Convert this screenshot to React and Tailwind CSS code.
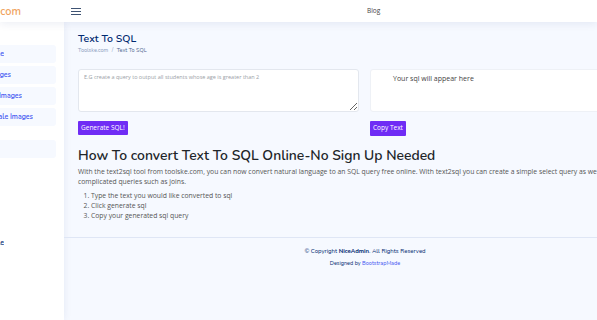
import React from 'react';

const navItems = [
  { label: 'Home', clip: 'w-[4px]' },
  { label: 'Resize Images', clip: 'w-[11px]' },
  { label: 'Compress Images', clip: 'w-[22px]' },
  { label: 'Upscale Images', clip: 'w-[33px]' },
];

const App = () => {
  return (
    <div className="w-[597px] h-[320px] overflow-hidden bg-[#f6f9ff] text-[#444444]" style={{ fontFamily: '"Open Sans", sans-serif' }}>
      {/* Header */}
      <header className="relative z-10 flex items-center h-[22px] bg-white shadow-[0_2px_8px_rgba(1,41,112,0.08)]">
        <div className="w-[64px] shrink-0">
          <div className="w-[21px] overflow-hidden flex justify-end">
            <span className="whitespace-nowrap text-[11px] font-semibold text-[#f0a35e] leading-none" style={{ fontFamily: 'Nunito, "Noto Sans", sans-serif' }}>
              toolske.com
            </span>
          </div>
        </div>
        <button className="ml-[7px] flex flex-col gap-[2px] w-[10px]">
          <span className="block h-[1px] w-[10px] bg-[#3e5373]" />
          <span className="block h-[1px] w-[10px] bg-[#3e5373]" />
          <span className="block h-[1px] w-[10px] bg-[#3e5373]" />
        </button>
        <div className="ml-[286px] text-[6.5px] text-[#444]">Blog</div>
      </header>

      <div className="flex h-[298px]">
        {/* Sidebar */}
        <aside className="w-[64px] shrink-0 bg-white shadow-[0_0_8px_rgba(1,41,112,0.08)] pt-[23px] pr-[8px]" style={{ fontFamily: 'Nunito, "Noto Sans", sans-serif' }}>
          <div className="flex flex-col gap-[3px]">
            {navItems.map((item) => (
              <div key={item.label} className="h-[18px] bg-[#f6f9ff] rounded-r-[3px] flex items-center">
                <div className={`${item.clip} overflow-hidden flex justify-end`}>
                  <span className="whitespace-nowrap text-[7px] font-semibold text-[#4154f1]">{item.label}</span>
                </div>
              </div>
            ))}
            <div className="h-[18px] mt-[11px] bg-[#f6f9ff] rounded-r-[3px]" />
          </div>
          <div className="mt-[80px] w-[4px] overflow-hidden flex justify-end">
            <span className="whitespace-nowrap text-[7px] font-semibold text-[#012970]">Profile</span>
          </div>
        </aside>

        {/* Main */}
        <main className="w-[602px] shrink-0 flex flex-col">
          <div className="pl-[14px] pr-[34px] pt-[12px]">
            <h1 className="text-[10.5px] font-semibold text-[#012970] leading-none" style={{ fontFamily: 'Nunito, "Noto Sans", sans-serif' }}>
              Text To SQL
            </h1>
            <div className="mt-[3px] text-[5.5px] text-[#899bbd] leading-none" style={{ fontFamily: 'Nunito, "Noto Sans", sans-serif' }}>
              Toolske.com <span className="mx-[2px]">/</span> <span className="text-[#51678f]">Text To SQL</span>
            </div>

            <div className="mt-[16px] flex gap-[11px]">
              <div className="w-[281px] shrink-0">
                <textarea
                  className="block w-full h-[43px] bg-white border border-[#e3e7ee] rounded-[3px] px-[5px] py-[3px] text-[5.5px] placeholder:text-[#9aa0a6] outline-none"
                  placeholder="E.G create a query to output all students whose age is greater than 2"
                />
                <button className="mt-[9px] h-[14px] px-[3px] bg-[#6f2cf5] text-white text-[6.5px] leading-none rounded-[1px]">
                  Generate SQL!
                </button>
              </div>
              <div className="flex-1">
                <div className="h-[43px] bg-white rounded-[3px] border border-[#eef1f6] pl-[22px] pt-[4px] text-[7px] text-[#444]">
                  Your sql will appear here
                </div>
                <button className="mt-[7px] h-[15px] px-[3px] bg-[#6f2cf5] text-white text-[6.5px] leading-none rounded-[1px]">
                  Copy Text
                </button>
              </div>
            </div>

            <h2 className="mt-[13px] text-[13.9px] font-semibold text-[#212529] leading-none whitespace-nowrap" style={{ fontFamily: 'Nunito, "Noto Sans", sans-serif' }}>
              How To convert Text To SQL Online-No Sign Up Needed
            </h2>
            <p className="mt-[4px] text-[6.8px] leading-[10px] text-[#555]">
              With the text2sql tool from toolske.com, you can now convert natural language to an SQL query free online. With text2sql you can create a simple select query as well as complicated queries such as joins.
            </p>
            <ol className="mt-[4px] pl-[13px] list-decimal text-[6.8px] leading-[10px] text-[#555]">
              <li>Type the text you would like converted to sql</li>
              <li>Click generate sql</li>
              <li>Copy your generated sql query</li>
            </ol>
          </div>

          <footer className="mt-[16px] border-t border-[#dfe6f5] pt-[9px] text-center text-[6px] text-[#012970]" style={{ fontFamily: 'Nunito, "Noto Sans", sans-serif' }}>
            <div>
              © Copyright <span className="font-bold">NiceAdmin</span>. All Rights Reserved
            </div>
            <div className="mt-[3px] text-[5.5px]">
              Designed by <span className="text-[#4154f1]">BootstrapMade</span>
            </div>
          </footer>
        </main>
      </div>
    </div>
  );
};

export default App;
